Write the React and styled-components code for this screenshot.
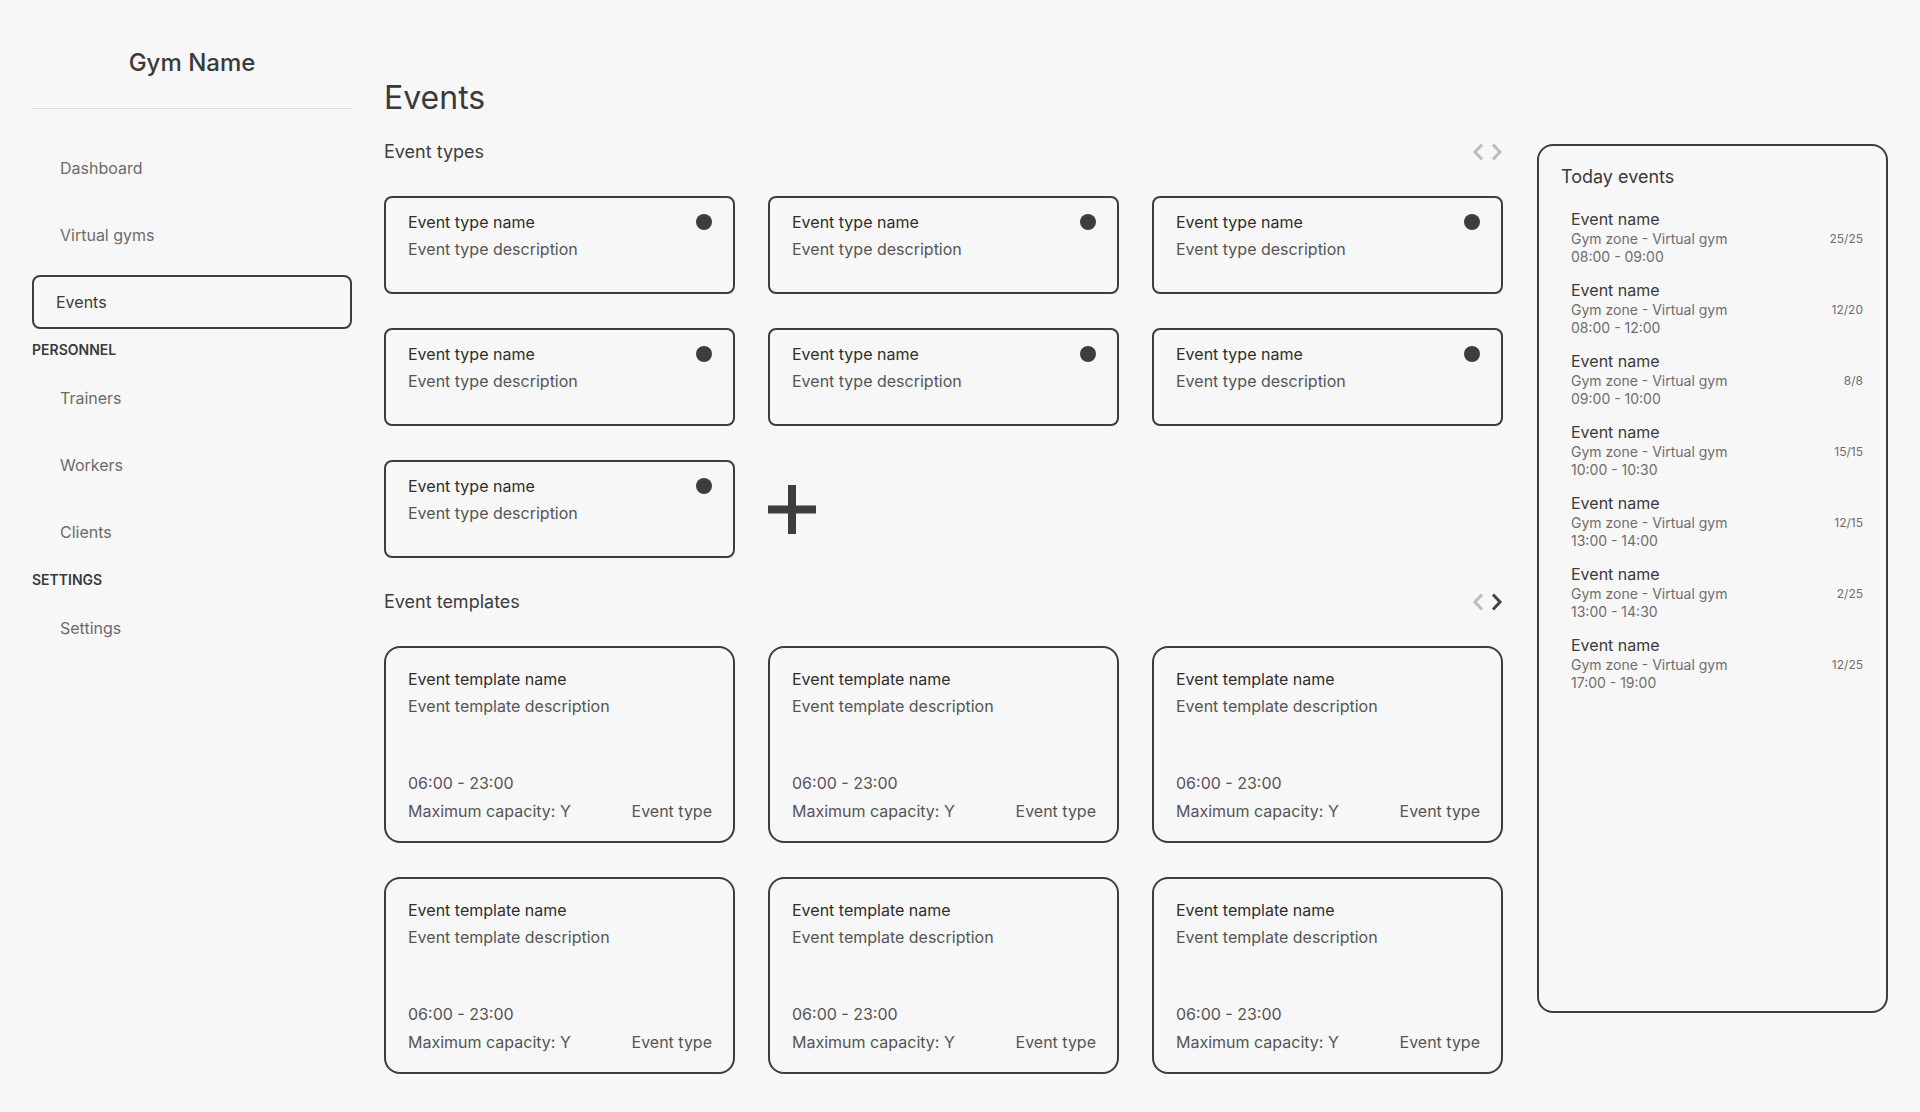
import React from 'react'
import styled, { createGlobalStyle } from 'styled-components'

const GlobalStyle = createGlobalStyle`
  body {
    margin: 0;
    background: #f7f7f7;
    font-family: Inter, "Noto Sans", sans-serif;
    color: #3d3d3d;
  }
  * { box-sizing: border-box; }
`

const Page = styled.div`
  display: flex;
  min-height: 100vh;
`

const Sidebar = styled.aside`
  width: 384px;
  flex-shrink: 0;
  padding: 47px 32px 0 32px;
`

const Brand = styled.div`
  font-size: 24px;
  line-height: 32px;
  font-weight: 500;
  text-align: center;
  color: #3a3a3a;
`

const Divider = styled.hr`
  margin: 29px 0 0;
  border: none;
  border-top: 1px solid #dcdcdc;
`

const Nav = styled.nav`
  margin-top: 32px;
  display: flex;
  flex-direction: column;
  gap: 13px;
`

const NavItem = styled.div`
  height: 54px;
  display: flex;
  align-items: center;
  font-size: 16px;
  border-radius: 8px;
  padding-left: ${(p) => (p.$active ? '22px' : '28px')};
  border: ${(p) => (p.$active ? '2px solid #3d3d3d' : 'none')};
  color: ${(p) => (p.$active ? '#3a3a3a' : '#6b6b6b')};
`

const NavLabel = styled.div`
  font-size: 14px;
  line-height: 16px;
  font-weight: 600;
  color: #3a3a3a;
  text-transform: uppercase;
`

const Main = styled.main`
  flex: 1;
  padding: 78px 32px 0 0;
`

const Title = styled.h1`
  margin: 0;
  font-size: 32px;
  line-height: 40px;
  font-weight: 400;
  color: #3a3a3a;
`

const Body = styled.div`
  margin-top: 22px;
  display: flex;
  gap: 34px;
`

const Content = styled.div`
  width: 1119px;
  display: flex;
  flex-direction: column;
`

const Section = styled.section`
  & + & { margin-top: 32px; }
`

const SectionHeader = styled.div`
  height: 24px;
  display: flex;
  align-items: center;
  justify-content: space-between;
  font-size: 18px;
  line-height: 24px;
  color: #3d3d3d;
`

const Pager = styled.div`
  display: flex;
  gap: 7px;
  align-items: center;
`

const Grid = styled.div`
  margin-top: 32px;
  display: grid;
  grid-template-columns: repeat(3, 1fr);
  gap: 34px 33px;
`

const TypeCard = styled.div`
  height: 98px;
  border: 2px solid #3d3d3d;
  border-radius: 8px;
  padding: 13px 21px 0 22px;
`

const CardTop = styled.div`
  display: flex;
  align-items: center;
  justify-content: space-between;
`

const CardName = styled.div`
  font-size: 16px;
  line-height: 22px;
  font-weight: 400;
  color: #2e2e2e;
`

const CardText = styled.div`
  font-size: 16px;
  line-height: 22px;
  color: #555;
  margin-top: ${(p) => p.$mt || 0}px;
`

const Dot = styled.span`
  width: 16px;
  height: 16px;
  border-radius: 50%;
  background: #3d3d3d;
`

const AddCell = styled.div`
  display: flex;
  align-items: center;
`

const TemplateCard = styled.div`
  height: 197px;
  border: 2px solid #3d3d3d;
  border-radius: 16px;
  padding: 20px 21px 19px 22px;
  display: flex;
  flex-direction: column;
`

const CardFooter = styled.div`
  margin-top: auto;
  display: flex;
  flex-direction: column;
  gap: 6px;
`

const FooterRow = styled.div`
  display: flex;
  justify-content: space-between;
`

const Panel = styled.aside`
  width: 351px;
  height: 869px;
  margin-top: 4px;
  border: 2px solid #3d3d3d;
  border-radius: 16px;
  padding: 19px 22px 0 22px;
`

const PanelTitle = styled.div`
  font-size: 18px;
  line-height: 24px;
  color: #3a3a3a;
`

const EventList = styled.div`
  margin-top: 19px;
  display: flex;
  flex-direction: column;
  gap: 13px;
`

const EventRow = styled.div`
  display: flex;
  justify-content: space-between;
  padding: 0 1px 0 10px;
`

const EventName = styled.div`
  font-size: 16px;
  line-height: 22px;
  color: #3a3a3a;
`

const EventSub = styled.div`
  font-size: 14px;
  line-height: 18px;
  color: #6e6e6e;
`

const Count = styled.div`
  padding-top: 22px;
  font-size: 12px;
  line-height: 18px;
  color: #6e6e6e;
`

function Chevron({ dir, color }) {
  const pts = dir === 'left' ? '10,1.5 3,9 10,16.5' : '2,1.5 9,9 2,16.5'
  return (
    <svg width="12" height="18" viewBox="0 0 12 18">
      <polyline points={pts} fill="none" stroke={color} strokeWidth="3" />
    </svg>
  )
}

function Plus() {
  return (
    <svg width="48" height="49" viewBox="0 0 48 49">
      <rect x="20" y="0" width="8" height="49" fill="#3d3d3d" />
      <rect x="0" y="20.5" width="48" height="8" fill="#3d3d3d" />
    </svg>
  )
}

const todayEvents = [
  ['08:00 - 09:00', '25/25'],
  ['08:00 - 12:00', '12/20'],
  ['09:00 - 10:00', '8/8'],
  ['10:00 - 10:30', '15/15'],
  ['13:00 - 14:00', '12/15'],
  ['13:00 - 14:30', '2/25'],
  ['17:00 - 19:00', '12/25'],
]

export default function App() {
  return (
    <>
      <GlobalStyle />
      <Page>
        <Sidebar>
          <Brand>Gym Name</Brand>
          <Divider />
          <Nav>
            <NavItem>Dashboard</NavItem>
            <NavItem>Virtual gyms</NavItem>
            <NavItem $active>Events</NavItem>
            <NavLabel>Personnel</NavLabel>
            <NavItem>Trainers</NavItem>
            <NavItem>Workers</NavItem>
            <NavItem>Clients</NavItem>
            <NavLabel>Settings</NavLabel>
            <NavItem>Settings</NavItem>
          </Nav>
        </Sidebar>
        <Main>
          <Title>Events</Title>
          <Body>
            <Content>
              <Section>
                <SectionHeader>
                  Event types
                  <Pager>
                    <Chevron dir="left" color="#bdbdbd" />
                    <Chevron dir="right" color="#bdbdbd" />
                  </Pager>
                </SectionHeader>
                <Grid>
                  {Array.from({ length: 7 }).map((_, i) => (
                    <TypeCard key={i}>
                      <CardTop>
                        <CardName>Event type name</CardName>
                        <Dot />
                      </CardTop>
                      <CardText $mt={5}>Event type description</CardText>
                    </TypeCard>
                  ))}
                  <AddCell>
                    <Plus />
                  </AddCell>
                </Grid>
              </Section>
              <Section>
                <SectionHeader>
                  Event templates
                  <Pager>
                    <Chevron dir="left" color="#bdbdbd" />
                    <Chevron dir="right" color="#444" />
                  </Pager>
                </SectionHeader>
                <Grid>
                  {Array.from({ length: 6 }).map((_, i) => (
                    <TemplateCard key={i}>
                      <CardName>Event template name</CardName>
                      <CardText $mt={5}>Event template description</CardText>
                      <CardFooter>
                        <CardText>06:00 - 23:00</CardText>
                        <FooterRow>
                          <CardText>Maximum capacity: Y</CardText>
                          <CardText>Event type</CardText>
                        </FooterRow>
                      </CardFooter>
                    </TemplateCard>
                  ))}
                </Grid>
              </Section>
            </Content>
            <Panel>
              <PanelTitle>Today events</PanelTitle>
              <EventList>
                {todayEvents.map(([time, count], i) => (
                  <EventRow key={i}>
                    <div>
                      <EventName>Event name</EventName>
                      <EventSub>Gym zone - Virtual gym</EventSub>
                      <EventSub>{time}</EventSub>
                    </div>
                    <Count>{count}</Count>
                  </EventRow>
                ))}
              </EventList>
            </Panel>
          </Body>
        </Main>
      </Page>
    </>
  )
}
